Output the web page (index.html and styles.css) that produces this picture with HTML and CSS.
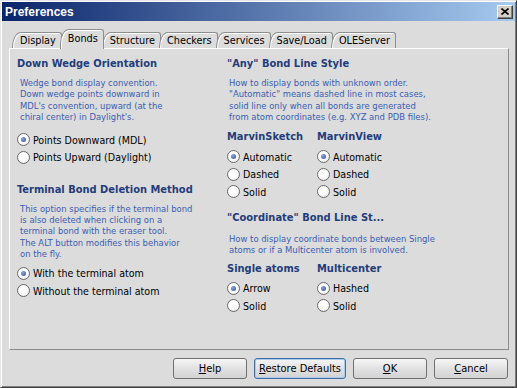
FILE: index.html
```html
<!DOCTYPE html>
<html lang="en">
  <head>
    <meta charset="UTF-8" />
    <title>Preferences</title>
    <link rel="stylesheet" href="styles.css">
  </head>
  <body>
    <div class="window">
      <div class="titlebar">
        <span class="title">Preferences</span>
        <span class="close">
          <svg width="8" height="7" viewBox="0 0 8 7"><path d="M0.5 0.5 L7.5 6.5 M7.5 0.5 L0.5 6.5" stroke="#000" stroke-width="1.6"/></svg>
        </span>
      </div>
      <div class="main">
        <div class="tabs">
          <div class="tab">Display</div>
          <div class="tab active">Bonds</div>
          <div class="tab">Structure</div>
          <div class="tab">Checkers</div>
          <div class="tab">Services</div>
          <div class="tab">Save/Load</div>
          <div class="tab">OLEServer</div>
        </div>
        <div class="panel">
          <div class="col left">
            <h3 class="heading">Down Wedge Orientation</h3>
            <p class="desc">Wedge bond display convention.<br>Down wedge points downward in<br>MDL's convention, upward (at the<br>chiral center) in Daylight's.</p>
            <div class="options wedge">
              <label class="radio checked"><span class="dot"></span>Points Downward (MDL)</label>
              <label class="radio"><span class="dot"></span>Points Upward (Daylight)</label>
            </div>
            <h3 class="heading deletion">Terminal Bond Deletion Method</h3>
            <p class="desc">This option specifies if the terminal bond<br>is also deleted when clicking on a<br>terminal bond with the eraser tool.<br>The ALT button modifies this behavior<br>on the fly.</p>
            <div class="options terminal">
              <label class="radio checked"><span class="dot"></span>With the terminal atom</label>
              <label class="radio"><span class="dot"></span>Without the terminal atom</label>
            </div>
          </div>
          <div class="col right">
            <h3 class="heading">"Any" Bond Line Style</h3>
            <p class="desc">How to display bonds with unknown order.<br>"Automatic" means dashed line in most cases,<br>solid line only when all bonds are generated<br>from atom coordinates (e.g. XYZ and PDB files).</p>
            <div class="group any">
              <div class="sub">
                <h4>MarvinSketch</h4>
                <label class="radio checked"><span class="dot"></span>Automatic</label>
                <label class="radio"><span class="dot"></span>Dashed</label>
                <label class="radio"><span class="dot"></span>Solid</label>
              </div>
              <div class="sub">
                <h4>MarvinView</h4>
                <label class="radio checked"><span class="dot"></span>Automatic</label>
                <label class="radio"><span class="dot"></span>Dashed</label>
                <label class="radio"><span class="dot"></span>Solid</label>
              </div>
            </div>
            <h3 class="heading coord">"Coordinate" Bond Line St...</h3>
            <p class="desc">How to display coordinate bonds between Single<br>atoms or if a Multicenter atom is involved.</p>
            <div class="group coordinate">
              <div class="sub">
                <h4>Single atoms</h4>
                <label class="radio checked"><span class="dot"></span>Arrow</label>
                <label class="radio"><span class="dot"></span>Solid</label>
              </div>
              <div class="sub">
                <h4>Multicenter</h4>
                <label class="radio checked"><span class="dot"></span>Hashed</label>
                <label class="radio"><span class="dot"></span>Solid</label>
              </div>
            </div>
          </div>
        </div>
        <div class="buttons">
          <button class="btn"><u>H</u>elp</button>
          <button class="btn wide focused"><u>R</u>estore Defaults</button>
          <button class="btn"><u>O</u>K</button>
          <button class="btn"><u>C</u>ancel</button>
        </div>
      </div>
    </div>
  </body>
</html>
```

FILE: styles.css
```css
* {
  box-sizing: border-box;
}
body {
  margin: 0;
  background: #dcdcdc;
  font-family: "DejaVu Sans Condensed", "DejaVu Sans", sans-serif;
  font-stretch: condensed;
}
.window {
  width: 517px;
  height: 388px;
  padding: 1px;
  background: #dcdcdc;
  border: 1px solid;
  border-color: #e6e6e6 #404040 #404040 #e6e6e6;
  box-shadow: inset 1px 1px #fff, inset -1px -1px #808080;
}
.titlebar {
  height: 19px;
  display: flex;
  align-items: center;
  justify-content: space-between;
  padding: 0 2px 0 3px;
  background: linear-gradient(to right, #0a246a, #a6caf0);
}
.title {
  color: #fff;
  font-family: "Liberation Sans", Arial, sans-serif;
  font-weight: bold;
  font-size: 12px;
}
.close {
  width: 16px;
  height: 14px;
  display: flex;
  align-items: center;
  justify-content: center;
  background: #d4d0c8;
  border: 1px solid;
  border-color: #fff #404040 #404040 #fff;
  box-shadow: inset -1px -1px #808080;
}
.main {
  padding: 8px 6px 0 7px;
}
.tabs {
  display: flex;
  align-items: flex-end;
  height: 19px;
  padding-left: 5px;
}
.tab {
  height: 16px;
  padding: 0 5px 0 7px;
  font-size: 10.8px;
  line-height: 15px;
  color: #000;
  border: 1px solid #8e8e8e;
  border-bottom: none;
  border-top-left-radius: 9px 15px;
  border-top-right-radius: 3px;
  box-shadow: inset 1px 1px #fff;
  margin-left: -2px;
}
.tab.active {
  position: relative;
  z-index: 1;
  height: 20px;
  margin-bottom: -1px;
  background: #dcdcdc;
  line-height: 17px;
}
.panel {
  height: 302px;
  display: flex;
  padding: 7px 0 0 7px;
  border: 1px solid;
  border-color: #fff #8c8c8c #8c8c8c #fff;
}
.col.left {
  width: 210px;
}
.heading {
  margin: 0;
  height: 16px;
  line-height: 16px;
  font-size: 11px;
  font-weight: bold;
  color: #233d7b;
  white-space: nowrap;
}
.desc {
  margin: 5px 0 0;
  padding-left: 3px;
  font-size: 9.4px;
  line-height: 11.3px;
  color: #3a5db3;
  white-space: nowrap;
}
.right .desc {
  padding-left: 2px;
}
.options {
  display: flex;
  flex-direction: column;
}
.wedge {
  margin-top: 9px;
}
.heading.deletion {
  margin-top: 15.5px;
}
.terminal {
  margin-top: 5.5px;
}
.radio {
  display: flex;
  align-items: center;
  gap: 3px;
  height: 17.5px;
  font-size: 10.6px;
  color: #000;
  white-space: nowrap;
}
.dot {
  width: 13px;
  height: 13px;
  flex: none;
  border-radius: 50%;
  border: 1px solid #6a6a6a;
  background: radial-gradient(circle at 40% 35%, #fff 40%, #e4e4e4 100%);
  display: flex;
  align-items: center;
  justify-content: center;
}
.checked .dot::after {
  content: "";
  width: 5px;
  height: 5px;
  border-radius: 50%;
  background: radial-gradient(circle at 35% 35%, #8ea6dc, #2c4a96);
}
.group {
  display: flex;
}
.group.any {
  margin-top: 6.5px;
}
.group.coordinate {
  margin-top: 6px;
}
.sub {
  width: 90px;
  display: flex;
  flex-direction: column;
}
.sub h4 {
  margin: 0 0 3.25px;
  height: 16px;
  line-height: 16px;
  font-size: 11px;
  font-weight: bold;
  color: #233d7b;
  white-space: nowrap;
}
.coordinate .sub h4 {
  margin-bottom: 2.25px;
}
.heading.coord {
  margin-top: 10px;
}
.right .heading.coord + .desc {
  margin-top: 6.35px;
}
.buttons {
  display: flex;
  justify-content: flex-end;
  gap: 7px;
  margin-top: 8px;
  padding-right: 1px;
}
.btn {
  width: 74px;
  height: 21px;
  padding: 0;
  font-family: "DejaVu Sans Condensed", "DejaVu Sans", sans-serif;
  font-stretch: condensed;
  font-size: 11px;
  color: #000;
  border: 1px solid #707070;
  border-radius: 3px;
  background: linear-gradient(#f6f6f6, #e2e2e2 50%, #d2d2d2);
}
.btn.wide {
  width: 92px;
}
.btn.focused {
  border-color: #3c6fa8;
  box-shadow: inset 0 0 0 1px #a9c8ea;
}
```
